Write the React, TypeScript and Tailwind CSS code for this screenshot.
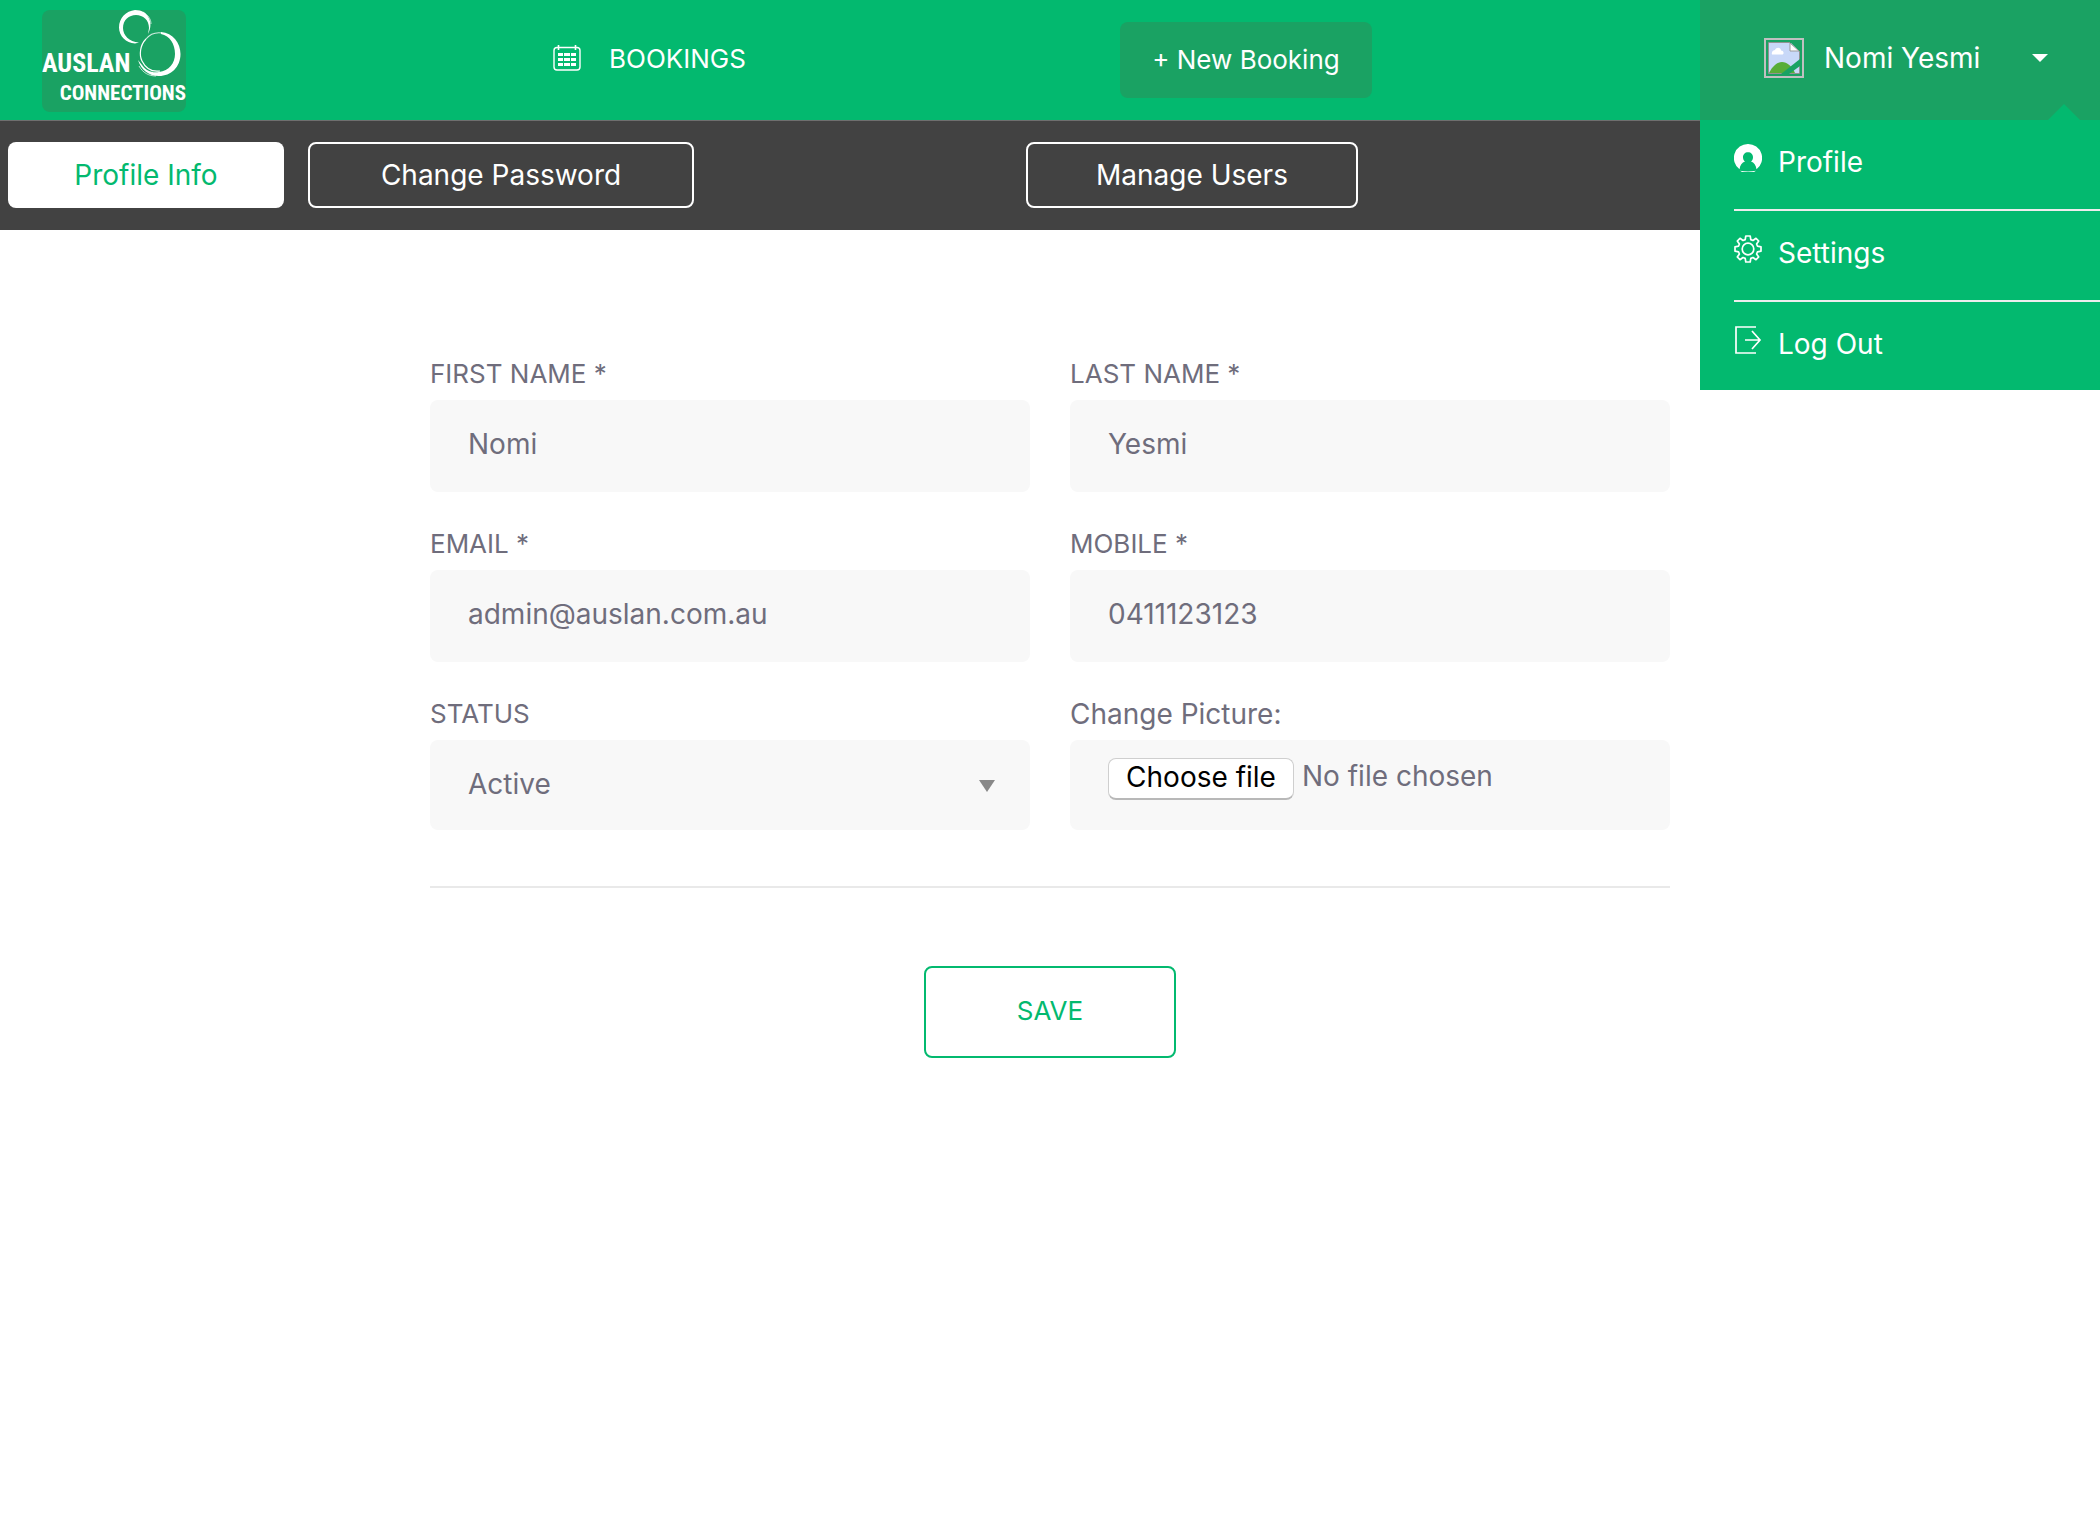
import { useState } from "react";
import type { ReactNode } from "react";

function Logo() {
  return (
    <svg viewBox="0 0 144 102" className="h-[102px] w-36 rounded-lg bg-[#1aa263]" role="img" aria-label="Auslan Connections">
      <g fill="#fff">
        <path fillRule="evenodd" d="M93 0C84 1 77 8 77 17.500C77 26 84 33 93 33.500L97 32.500C87 32 81 25 81 18C81 10 87 5 94 5C101 5 107 10 107 18L106 24C112 14 107 0 93 0Z" />
        <path d="M119 22C131 23 138.500 33 138.500 44C138.500 57 129 66 117 66C107 66 99 60 96 50L100 55C104 61 110 63 117 62C127 61 133 53 133 44C133 34 128 26 119 24Z" />
      </g>
      <g fill="none" stroke="#fff">
        <path d="M101 2C106 5 109 9 109 14" strokeWidth="1" opacity=".7" />
        <path d="M104 29C98 35 97 45 100 51C104 59 111 62 118 61" strokeWidth="1.200" />
        <path d="M104 29C108 24 113 22 120 23" strokeWidth="1.200" opacity=".8" />
        <path d="M97 56C101 63 107 66 114 66" strokeWidth="1" opacity=".7" />
      </g>
      <g fill="#fff" fontWeight="700" fontFamily="'Liberation Sans Narrow', 'Roboto Condensed', 'Open Sans Condensed', Roboto, sans-serif">
        <text x="0" y="62" fontSize="26">AUSLAN</text>
        <text x="144" y="90" fontSize="21" textAnchor="end">CONNECTIONS</text>
      </g>
    </svg>
  );
}

function CalendarIcon() {
  return (
    <svg viewBox="0 0 28 26" className="h-[26px] w-7" aria-hidden="true">
      <rect x="1" y="2.500" width="26" height="22.500" rx="3" fill="none" stroke="#fff" strokeWidth="1.400" />
      <path d="M5.500 0v5M22.500 0v5" stroke="#fff" strokeWidth="1.600" />
      <g fill="#fff">
        <path d="M5 8h5v3H5zM11 8h6v3h-6zM18 8h5v3h-5zM5 13h5v3H5zM11 13h6v3h-6zM18 13h5v3h-5zM5 18h5v3H5zM11 18h6v3h-6zM18 18h5v3h-5z" />
      </g>
    </svg>
  );
}

function MissingImage() {
  return (
    <svg viewBox="0 0 40 40" className="size-10" role="img" aria-label="User picture">
      <rect x="1" y="1" width="38" height="38" fill="none" stroke="#c0c0c0" strokeWidth="2" />
      <path d="M5 5H27L35 13V35H5Z" fill="#c8d8f8" />
      <path d="M5 35C9 27 14 24 18 24C23 24 28 28 31 35Z" fill="#58ad37" />
      <path d="M8 16.500C7 13 10 12 11 12C12 9 17 9 17 12.500C20 12.500 20.500 16.500 18 16.500Z" fill="#fff" />
      <path d="M26 5V13H35Z" fill="#fff" stroke="#999" strokeWidth="1" />
      <path d="M26 4.500H4.500V35.500H35.500V13" fill="none" stroke="#929292" strokeWidth="1" />
      <path d="M36 21V28L25 36H17Z" fill="#1aa263" />
    </svg>
  );
}

function PersonIcon() {
  return (
    <svg viewBox="0 0 28 28" className="size-7" aria-hidden="true">
      <path
        fill="#fff"
        fillRule="evenodd"
        d="M14 0A14 14 0 0 1 22.500 25.200C22 21.500 20 18.600 17 17.600C18.300 16.600 19 15 19 13.200C19 10.300 17 8.200 14 8.200S9 10.300 9 13.200C9 15 9.700 16.600 11 17.600C8 18.600 6 21.500 5.500 25.200A14 14 0 0 1 14 0ZM6 26.800C11 27.600 17 27.600 22 26.800L20 28H8Z"
      />
    </svg>
  );
}

function GearIcon() {
  return (
    <svg viewBox="0 0 28 28" className="size-7" fill="none" stroke="#fff" strokeWidth="1.700" strokeLinejoin="round" aria-hidden="true">
      <path d="M11.800 1H16.200L16.800 4.600L19 5.500L22 3.300L24.700 6L22.600 9L23.500 11.200L27 11.800V16.200L23.500 16.800L22.600 19L24.700 22L22 24.700L19 22.500L16.800 23.400L16.200 27H11.800L11.200 23.400L9 22.500L6 24.700L3.300 22L5.400 19L4.500 16.800L1 16.200V11.800L4.500 11.200L5.400 9L3.300 6L6 3.300L9 5.500L11.200 4.600Z" />
      <circle cx="14" cy="14" r="5.800" />
    </svg>
  );
}

function LogoutIcon() {
  return (
    <svg viewBox="0 0 28 28" className="size-7" fill="none" stroke="#fff" strokeWidth="1.700" aria-hidden="true">
      <path d="M22 1H2V27H22M11 14H26M18 5L26 14L18 23" />
    </svg>
  );
}

function MenuItem({ icon, children, last }: { icon: ReactNode; children: ReactNode; last?: boolean }) {
  return (
    <li className={last ? "pt-6 pb-6" : "border-b-2 border-[#ededed] pt-6 pb-[25px]"}>
      <a href="#" className="flex h-10 items-start gap-4">
        {icon}
        <span className="leading-9">{children}</span>
      </a>
    </li>
  );
}

const fieldClass = "h-[92px] w-full rounded-lg bg-[#f8f8f8] px-[38px] pb-1 outline-none";

function Field({ id, label, children }: { id: string; label: string; children: ReactNode }) {
  const caps = label === label.toUpperCase();
  return (
    <div>
      <label htmlFor={id} className={caps ? "block h-[42px] text-[26px] leading-[32px]" : "block h-[42px] leading-[32px]"}>
        {label}
      </label>
      {children}
    </div>
  );
}

export default function App() {
  const [first, setFirst] = useState("Nomi");
  const [last, setLast] = useState("Yesmi");
  const [email, setEmail] = useState("admin@auslan.com.au");
  const [mobile, setMobile] = useState("0411123123");
  const [file, setFile] = useState("No file chosen");

  return (
    <div className="min-h-screen bg-white font-['Inter',sans-serif] text-[28px] font-normal text-[#6f6d7c]">
      <header className="relative flex h-[120px] bg-[#03b96f] text-white">
        <div className="grid flex-1 grid-cols-[553fr_567fr_580fr] items-center">
          <a href="#" className="mb-[-2px] justify-self-start pl-[42px]">
            <Logo />
          </a>
          <a href="#" className="flex items-center gap-7 justify-self-start pb-1 text-[26px]">
            <CalendarIcon />
            BOOKINGS
          </a>
          <button className="h-[76px] w-[252px] justify-self-start rounded-lg bg-[#1aa263] pb-0.5 text-[26px]">+ New Booking</button>
        </div>
        <div className="w-[400px] shrink-0 bg-[#1aa263]">
          <button className="flex h-[116px] w-full items-center pl-16 text-left">
            <MissingImage />
            <span className="w-[206px] pl-5 whitespace-nowrap">Nomi Yesmi</span>
            <svg viewBox="0 0 16 8" className="ml-[22px] h-2 w-4" aria-hidden="true">
              <path d="M0 0H16L8 8Z" fill="#fff" />
            </svg>
          </button>
        </div>
        <nav className="absolute top-full right-0 z-10 w-[400px] bg-[#03b96f] pl-[34px]">
          <svg viewBox="0 0 32 16" className="absolute right-5 bottom-full h-4 w-8" aria-hidden="true">
            <path d="M0 16L16 0L32 16Z" fill="#03b96f" />
          </svg>
          <ul>
            <MenuItem icon={<PersonIcon />}>Profile</MenuItem>
            <MenuItem icon={<GearIcon />}>Settings</MenuItem>
            <MenuItem icon={<LogoutIcon />} last>
              Log Out
            </MenuItem>
          </ul>
        </nav>
      </header>

      <nav className="grid h-[110px] grid-cols-[1026fr_1074fr] items-start border-t border-[#6f6f6f] bg-[#424242] pt-[21px] text-white">
        <div className="flex gap-6 pl-2">
          <button className="h-[66px] w-[276px] rounded-lg bg-white text-[#03b96f]">Profile Info</button>
          <button className="h-[66px] w-[386px] rounded-lg border-2 border-white">Change Password</button>
        </div>
        <button className="h-[66px] w-[332px] rounded-lg border-2 border-white">Manage Users</button>
      </nav>

      <form className="mx-auto max-w-[1240px] pt-32" onSubmit={(e) => e.preventDefault()}>
        <div className="grid grid-cols-2 gap-x-10 gap-y-9">
          <Field id="first" label="FIRST NAME *">
            <input id="first" className={fieldClass} value={first} onChange={(e) => setFirst(e.target.value)} />
          </Field>
          <Field id="last" label="LAST NAME *">
            <input id="last" className={fieldClass} value={last} onChange={(e) => setLast(e.target.value)} />
          </Field>
          <Field id="email" label="EMAIL *">
            <input id="email" type="email" className={fieldClass} value={email} onChange={(e) => setEmail(e.target.value)} />
          </Field>
          <Field id="mobile" label="MOBILE *">
            <input id="mobile" type="tel" className={fieldClass} value={mobile} onChange={(e) => setMobile(e.target.value)} />
          </Field>
          <Field id="status" label="STATUS">
            <div className="relative">
              <select id="status" className="h-[90px] w-full appearance-none rounded-lg bg-[#f8f8f8] px-[38px] pb-0.5 outline-none">
                <option>Active</option>
                <option>Inactive</option>
              </select>
              <svg viewBox="0 0 16 12" className="pointer-events-none absolute top-10 right-[35px] h-3 w-4" aria-hidden="true">
                <path d="M0 0H16L8 12Z" fill="#888" />
              </svg>
            </div>
          </Field>
          <Field id="picture" label="Change Picture:">
            <div className="relative flex h-[90px] items-start gap-2 rounded-lg bg-[#f8f8f8] px-[38px] pt-[18px]">
              <input
                id="picture"
                type="file"
                className="sr-only"
                onChange={(e) => setFile(e.target.files?.[0]?.name ?? "No file chosen")}
              />
              <label
                htmlFor="picture"
                className="flex h-[42px] w-[186px] items-center justify-center rounded-lg border border-b-2 border-[#cfcfcf] border-b-[#b8b8b8] bg-white pb-1 leading-9 whitespace-nowrap text-black"
              >
                Choose file
              </label>
              <span className="leading-9">{file}</span>
            </div>
          </Field>
        </div>
        <hr className="mt-14 border-t-2 border-[#e9e9e9]" />
        <div className="mt-[78px] flex justify-center">
          <button className="h-[92px] w-[252px] rounded-lg border-2 border-[#03b96f] pb-1 text-[26px] text-[#03b96f]">SAVE</button>
        </div>
      </form>
    </div>
  );
}
